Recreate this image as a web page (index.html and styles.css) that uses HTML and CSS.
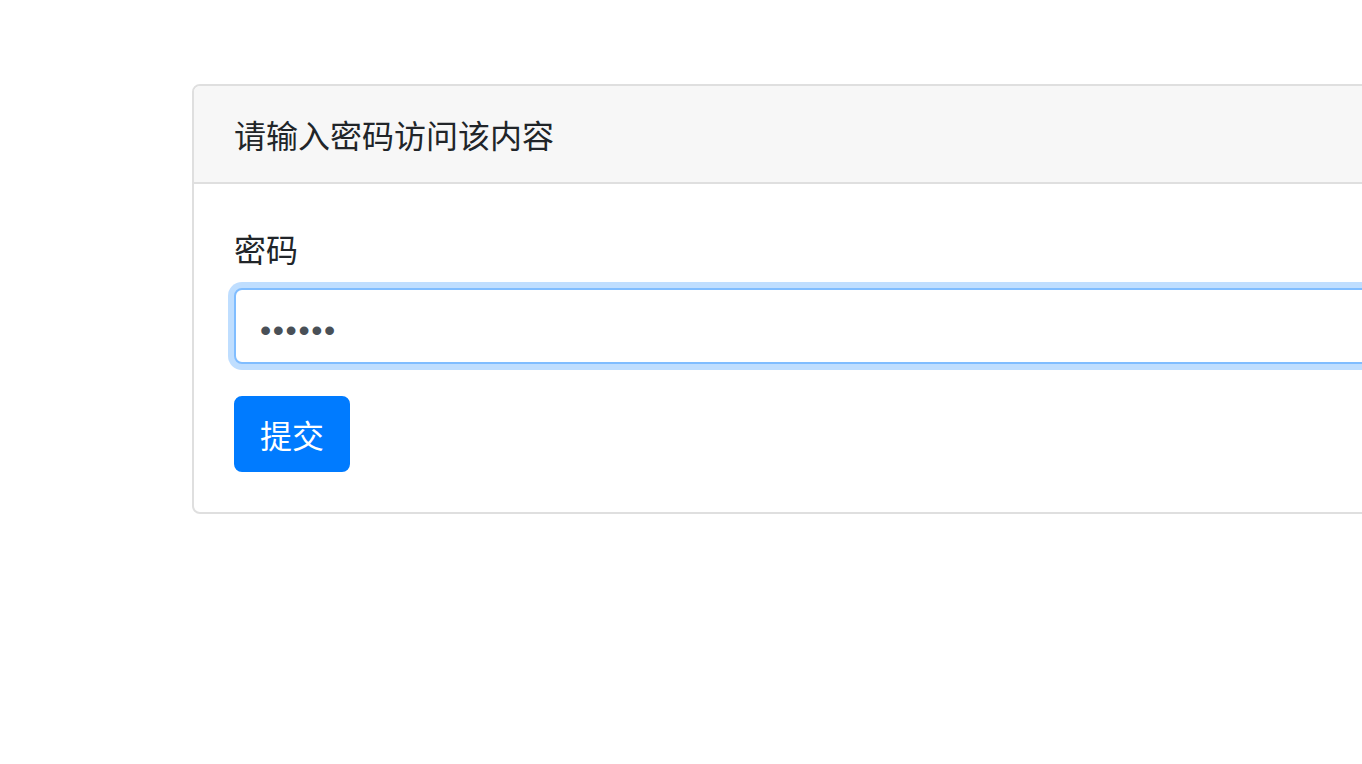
FILE: index.html
```html
<!DOCTYPE html>
<html lang="zh-CN">
<head>
    <meta charset="UTF-8">
    <meta name="viewport" content="width=device-width, initial-scale=1.0">
    <title>请输入密码</title>
    <link rel="stylesheet" href="styles.css">
</head>
<body>
    <div class="container">
        <div class="card">
            <div class="card-header">请输入密码访问该内容</div>
            <div class="card-body">
                <form>
                    <div class="form-group">
                        <label for="password">密码</label>
                        <input type="password" id="password" class="form-control focused" value="123456">
                    </div>
                    <button type="button" class="btn btn-primary">提交</button>
                </form>
            </div>
        </div>
    </div>
</body>
</html>
```

FILE: styles.css
```css
* {
    margin: 0;
    padding: 0;
    box-sizing: border-box;
}

html, body {
    height: 100%;
    background: #fff;
    overflow: hidden;
}

body {
    font-family: "Noto Sans CJK SC", "Noto Sans", sans-serif;
    font-size: 32px;
    line-height: 48px;
    color: #212529;
}

.container {
    padding: 84px 0 0 192px;
}

.card {
    width: 1400px;
    border: 2px solid #dfdfdf;
    border-radius: 8px;
    background: #fff;
}

.card-header {
    height: 98px;
    padding: 24px 40px;
    background: #f7f7f7;
    border-bottom: 2px solid #dfdfdf;
    border-radius: 6px 6px 0 0;
}

.card-body {
    padding: 40px;
}

.form-group {
    margin-bottom: 32px;
}

label {
    display: block;
    margin-bottom: 16px;
}

.form-control {
    display: block;
    width: 100%;
    height: 76px;
    padding: 16px 24px 8px;
    font-family: "Liberation Sans", Arial, sans-serif;
    font-size: 32px;
    line-height: 48px;
    letter-spacing: 1.6px;
    color: #495057;
    background: #fff;
    border: 2px solid #ced4da;
    border-radius: 8px;
    outline: none;
}

.form-control.focused {
    border-color: #80bdff;
    box-shadow: 0 0 0 6px rgba(0, 123, 255, 0.25);
}

.btn {
    display: inline-block;
    height: 76px;
    padding: 12px 24px;
    font-family: inherit;
    font-size: 32px;
    line-height: 48px;
    border: 2px solid transparent;
    border-radius: 8px;
    cursor: pointer;
}

.btn-primary {
    color: #fff;
    background: #007bff;
    border-color: #007bff;
}
```
